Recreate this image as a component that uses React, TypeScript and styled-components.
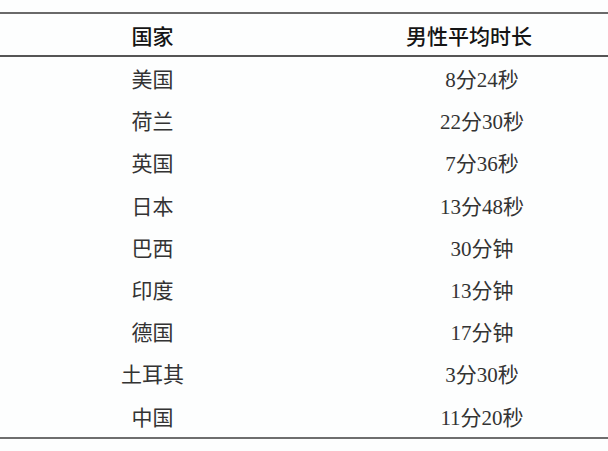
import styled, { createGlobalStyle } from "styled-components";

const rows = [
  { country: "美国", time: "8分24秒" },
  { country: "荷兰", time: "22分30秒" },
  { country: "英国", time: "7分36秒" },
  { country: "日本", time: "13分48秒" },
  { country: "巴西", time: "30分钟" },
  { country: "印度", time: "13分钟" },
  { country: "德国", time: "17分钟" },
  { country: "土耳其", time: "3分30秒" },
  { country: "中国", time: "11分20秒" },
];

const GlobalStyle = createGlobalStyle`
  html, body {
    margin: 0;
    padding: 0;
    background: #fdfefe;
  }
  body {
    font-family: "Liberation Serif", "Noto Sans CJK SC", serif;
  }
`;

const Page = styled.main`
  width: 608px;
  height: 451px;
  padding-top: 12px;
  box-sizing: border-box;
  overflow: hidden;
`;

const Table = styled.div`
  display: grid;
  grid-template-columns: 305px 1fr;
  border-bottom: 2px solid #6e6e6e;
`;

const Row = styled.div`
  display: contents;
`;

const HeaderCell = styled.div<{ $shift?: number }>`
  height: 41px;
  display: flex;
  align-items: center;
  justify-content: center;
  border-top: 2px solid #6a6a6a;
  border-bottom: 2px solid #555;
  font-family: "Noto Sans CJK SC", sans-serif;
  font-size: 21px;
  font-weight: 500;
  color: #151515;
  padding-left: ${(p) => p.$shift ?? 0}px;
`;

const Cell = styled.div<{ $shift?: number }>`
  height: 42.2px;
  display: flex;
  align-items: center;
  justify-content: center;
  font-size: 21px;
  color: #333;
  padding-left: ${(p) => p.$shift ?? 0}px;
`;

const App = () => {
  return (
    <>
      <GlobalStyle />
      <Page>
        <Table>
          <Row>
            <HeaderCell>国家</HeaderCell>
            <HeaderCell $shift={25}>男性平均时长</HeaderCell>
          </Row>
          {rows.map((r) => (
            <Row key={r.country}>
              <Cell>{r.country}</Cell>
              <Cell $shift={51}>{r.time}</Cell>
            </Row>
          ))}
        </Table>
      </Page>
    </>
  );
};

export default App;
